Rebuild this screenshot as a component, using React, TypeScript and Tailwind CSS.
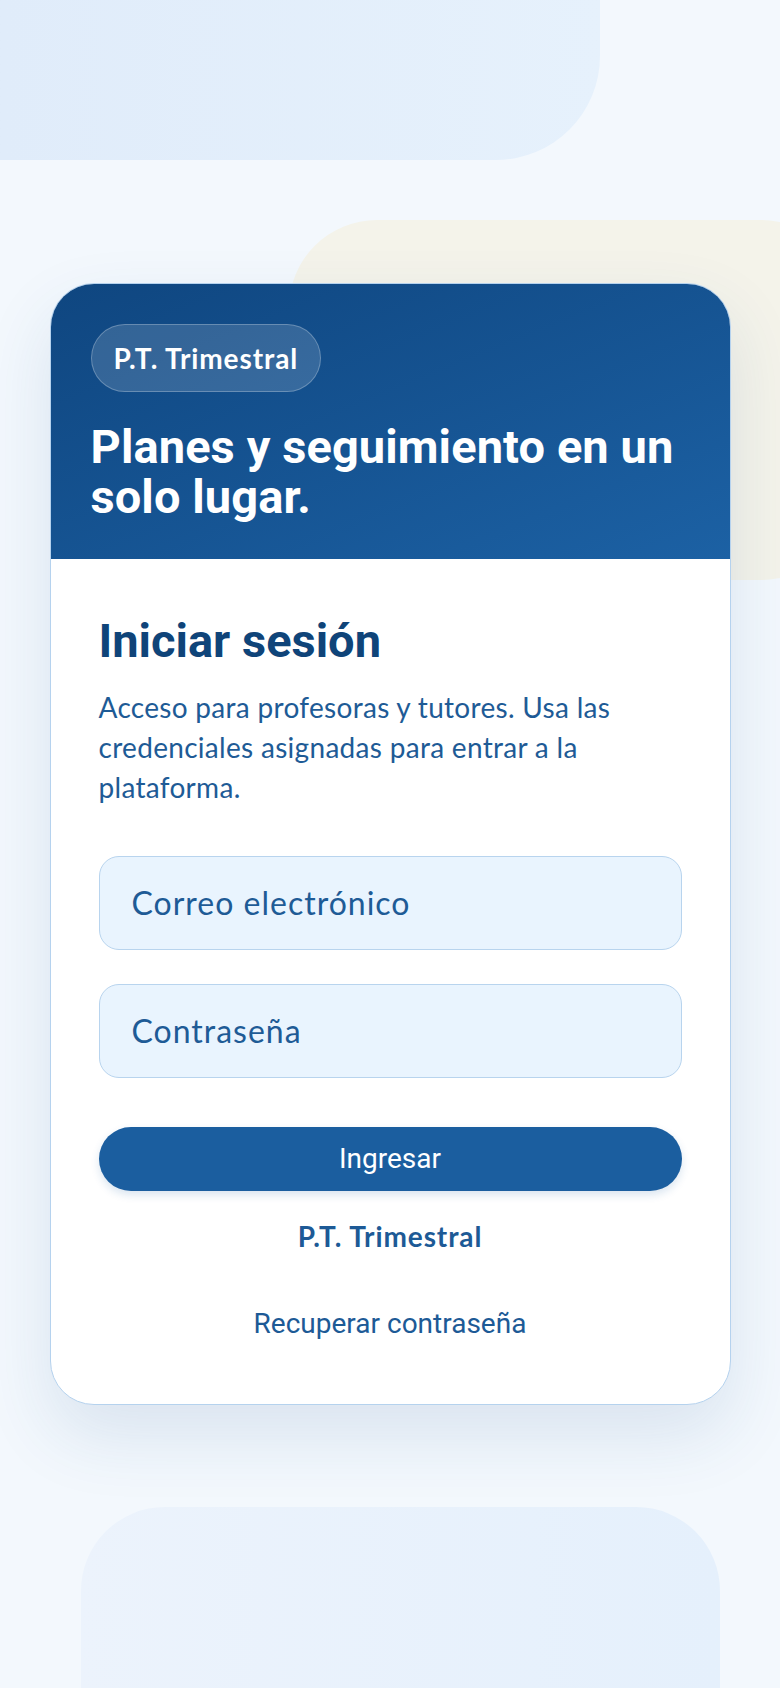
import React from "react";

export default function App() {
  return (
    <div className="relative min-h-[1688px] w-full overflow-hidden bg-[#f3f8fd] font-['Roboto',sans-serif]">
      {/* decorative background shapes */}
      <div className="pointer-events-none absolute left-0 top-0 h-[160px] w-[600px] rounded-br-[104px] bg-gradient-to-r from-[#e0ecfa] to-[#e6f1fc]" />
      <div className="pointer-events-none absolute left-[289px] top-[220px] h-[360px] w-[560px] rounded-[88px] bg-[#f4f3ea]" />
      <div className="pointer-events-none absolute left-[81px] top-[1507px] h-[300px] w-[639px] rounded-[84px] bg-gradient-to-r from-[#ecf3fc] to-[#e5f0fc]" />

      <main className="relative flex justify-center pt-[283px] pb-[100px]">
        <div className="w-[681px] overflow-hidden rounded-[44px] border-[1.5px] border-[#b5d2ee] bg-white shadow-[0_30px_70px_rgba(30,80,140,0.12)]">
          <header className="bg-gradient-to-br from-[#0f4680] to-[#1c61a4] px-[40px] pt-[40px] pb-[37px]">
            <div className="flex">
              <span className="flex h-[68px] items-center rounded-full border-[1.5px] border-white/25 bg-white/15 px-[22px] font-['Lato',sans-serif] text-[28px] font-bold tracking-[0.9px] text-white">
                P.T. Trimestral
              </span>
            </div>
            <h1 className="mt-[30px] text-[47px] font-bold leading-[50px] tracking-[0.1px] text-white">
              Planes y seguimiento en un solo lugar.
            </h1>
          </header>

          <section className="flex flex-col px-[48px] pt-[54px] pb-[62px]">
            <h2 className="text-[47px] font-bold leading-[56px] text-[#0f4479]">Iniciar sesión</h2>
            <p className="mt-[18px] font-['Lato',sans-serif] text-[28px] leading-[40px] tracking-[0.3px] text-[#1e5b96]">
              Acceso para profesoras y tutores. Usa las credenciales asignadas para entrar a la plataforma.
            </p>

            <div className="mt-[49px] flex flex-col gap-[34px]">
              <div className="flex h-[94px] items-center rounded-[20px] border-[1.5px] border-[#b8d4ee] bg-[#e9f4fe] px-[32px] font-['Lato',sans-serif] text-[32px] tracking-[1px] text-[#1e5b96]">
                Correo electrónico
              </div>
              <div className="flex h-[94px] items-center rounded-[20px] border-[1.5px] border-[#b8d4ee] bg-[#e9f4fe] px-[32px] font-['Lato',sans-serif] text-[32px] tracking-[1px] text-[#1e5b96]">
                Contraseña
              </div>
            </div>

            <button className="mt-[49px] flex h-[64px] items-center justify-center rounded-full bg-[#1b5e9f] text-[28px] text-white shadow-[0_4px_8px_rgba(27,94,159,0.16)]">
              Ingresar
            </button>

            <div className="mt-[27px] text-center font-['Lato',sans-serif] text-[28px] font-bold leading-[36px] tracking-[0.9px] text-[#1d5a96]">
              P.T. Trimestral
            </div>

            <div className="mt-[52px] text-center text-[28px] leading-[36px] text-[#1d5a96]">
              Recuperar contraseña
            </div>
          </section>
        </div>
      </main>
    </div>
  );
}
